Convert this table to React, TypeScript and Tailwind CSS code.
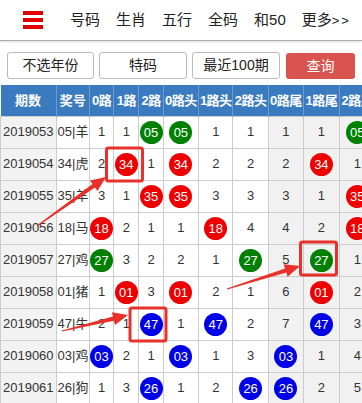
import React from 'react'

type Cell = number | string

const BALL: Record<string, string> = {
  r: 'bg-[#ee0000]',
  g: 'bg-[#008000]',
  b: 'bg-[#0000e6]',
}

// ball cells written as "r34", "g05", "b47"
const rows: { qi: string; hao: string; cells: Cell[] }[] = [
  { qi: '2019053', hao: '05|羊', cells: [1, 1, 'g05', 'g05', 1, 1, 1, 1, 'g05'] },
  { qi: '2019054', hao: '34|虎', cells: [2, 'r34', 1, 'r34', 2, 2, 2, 'r34', 1] },
  { qi: '2019055', hao: '35|羊', cells: [3, 1, 'r35', 'r35', 3, 3, 3, 1, 'r35'] },
  { qi: '2019056', hao: '18|马', cells: ['r18', 2, 1, 1, 'r18', 4, 4, 2, 'r18'] },
  { qi: '2019057', hao: '27|鸡', cells: ['g27', 3, 2, 2, 1, 'g27', 5, 'g27', 1] },
  { qi: '2019058', hao: '01|猪', cells: [1, 'r01', 3, 'r01', 2, 1, 6, 'r01', 2] },
  { qi: '2019059', hao: '47|牛', cells: [2, 1, 'b47', 1, 'b47', 2, 7, 'b47', 3] },
  { qi: '2019060', hao: '03|鸡', cells: ['b03', 2, 1, 'b03', 1, 3, 'b03', 1, 4] },
  { qi: '2019061', hao: '26|狗', cells: [1, 3, 'b26', 1, 2, 'b26', 'b26', 2, 5] },
  { qi: '2019062', hao: '12|蛇', cells: [3, 'r12', 1, 1, 3, 1, 1, 3, 'r12'] },
]

const heads = ['0路', '1路', '2路', '0路头', '1路头', '2路头', '0路尾', '1路尾', '2路尾']
const widths = [24, 25, 24, 35, 34, 35, 35, 35, 36]
const grayCol = [false, false, false, false, false, false, true, true, true]

function Ball({ code }: { code: string }) {
  return (
    <span
      className={`inline-flex w-[23px] h-[23px] rounded-full items-center justify-center text-white text-[13px] leading-none ${BALL[code[0]]}`}
    >
      {code.slice(1)}
    </span>
  )
}

function arrow(x1: number, y1: number, x2: number, y2: number) {
  const dx = x2 - x1
  const dy = y2 - y1
  const len = Math.hypot(dx, dy)
  const ux = dx / len
  const uy = dy / len
  const nx = -uy
  const ny = ux
  const head = 15
  const bx = x2 - ux * head
  const by = y2 - uy * head
  const p = (x: number, y: number) => `${x.toFixed(1)},${y.toFixed(1)}`
  return [
    p(x1 + nx * 0.5, y1 + ny * 0.5),
    p(bx + nx * 2.2, by + ny * 2.2),
    p(bx + nx * 6.5, by + ny * 6.5),
    p(x2, y2),
    p(bx - nx * 6.5, by - ny * 6.5),
    p(bx - nx * 2.2, by - ny * 2.2),
    p(x1 - nx * 0.5, y1 - ny * 0.5),
  ].join(' ')
}

export default function App() {
  return (
    <div className="relative w-[362px] h-[403px] overflow-hidden bg-white font-['Liberation_Sans','Noto_Sans_CJK_SC',sans-serif] text-[#333]">
      {/* top nav */}
      <div className="h-[41px] flex items-center border-b border-[#aaa] shadow-[0_1px_2px_rgba(0,0,0,0.15)]">
        <div className="w-[70px] flex justify-center pl-[2px]">
          <div className="flex flex-col gap-[3px] w-[20px] pr-[0px] -ml-[6px]">
            <span className="h-[4px] bg-[#e00000]" />
            <span className="h-[4px] bg-[#e00000]" />
            <span className="h-[4px] bg-[#e00000]" />
          </div>
        </div>
        <nav className="flex items-center gap-[16px] text-[15px] text-[#222]">
          <span>号码</span>
          <span>生肖</span>
          <span>五行</span>
          <span>全码</span>
          <span>和50</span>
          <span>
            更多<span className="tracking-[2px] text-[13px]">&gt;&gt;</span>
          </span>
        </nav>
      </div>

      {/* filters */}
      <div className="flex items-center gap-[5px] pl-[7px] pt-[10px] pb-[6px]">
        <button className="w-[87px] h-[27px] border border-[#bbb] rounded-[3px] text-[14px] text-[#222] bg-white">
          不选年份
        </button>
        <button className="w-[88px] h-[27px] border border-[#bbb] rounded-[3px] text-[14px] text-[#222] bg-white">
          特码
        </button>
        <button className="w-[88px] h-[27px] border border-[#bbb] rounded-[3px] text-[14px] text-[#222] bg-white">
          最近100期
        </button>
        <button className="w-[69px] h-[26px] ml-[1px] mt-[2px] rounded-[3px] text-[14px] text-white bg-[#d9534f]">
          查询
        </button>
      </div>

      {/* table */}
      <table className="table-fixed border-collapse w-[376px] text-[13px]">
        <colgroup>
          <col className="w-[55px]" />
          <col className="w-[33px]" />
          {widths.map((w, i) => (
            <col key={i} style={{ width: w }} />
          ))}
        </colgroup>
        <thead>
          <tr className="h-[31px] bg-[#3a7bbf] text-white font-bold">
            <th className="border-r border-[#6d9bd0] font-bold">期数</th>
            <th className="border-r border-[#6d9bd0] font-bold">奖号</th>
            {heads.map((h) => (
              <th key={h} className="border-r border-[#6d9bd0] font-bold whitespace-nowrap px-0 tracking-[-0.5px]">
                {h}
              </th>
            ))}
          </tr>
        </thead>
        <tbody>
          {rows.map((r) => (
            <tr key={r.qi} className="h-[32px]">
              <td className="border border-[#ccc] bg-[#f2f2f2] text-center px-0">{r.qi}</td>
              <td className="border border-[#ccc] text-left pl-[1px] whitespace-nowrap">{r.hao}</td>
              {r.cells.map((c, i) => (
                <td
                  key={i}
                  className={`border border-[#ccc] text-center p-0 ${grayCol[i] ? 'bg-[#f1f1f1]' : 'bg-white'}`}
                >
                  {typeof c === 'string' ? <Ball code={c} /> : c}
                </td>
              ))}
            </tr>
          ))}
        </tbody>
      </table>

      {/* annotations */}
      <svg className="absolute inset-0 pointer-events-none" width="362" height="403">
        <g fill="none" stroke="#e8312a" strokeWidth="3">
          <rect x="106.5" y="148" width="36" height="33" rx="2" />
          <rect x="300.5" y="242" width="36" height="33" rx="2" />
          <rect x="130" y="308" width="36" height="33" rx="2" />
        </g>
        <g fill="#e8312a">
          <polygon points={arrow(37, 226, 106, 177)} />
          <polygon points={arrow(227, 289, 300, 266)} />
          <polygon points={arrow(62, 331, 128, 315)} />
        </g>
      </svg>
    </div>
  )
}
